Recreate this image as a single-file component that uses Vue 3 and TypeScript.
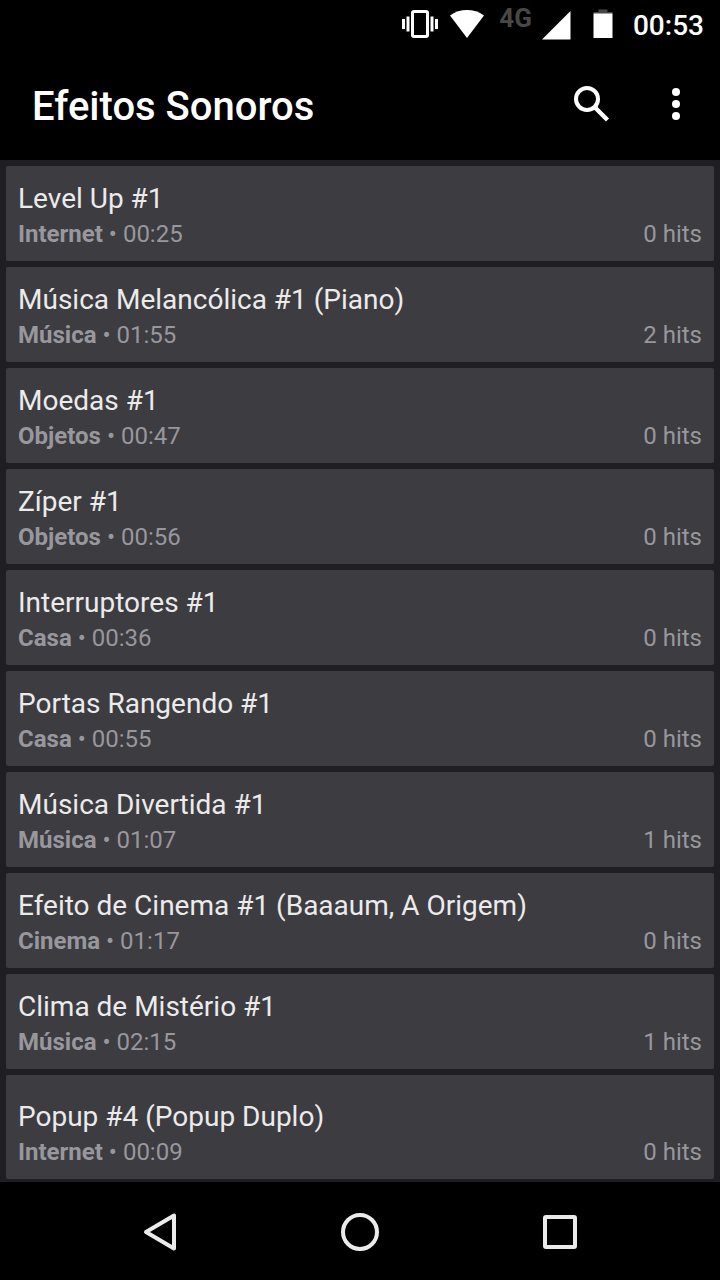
<script setup lang="ts">
interface Sound {
  title: string
  category: string
  duration: string
  hits: number
}

const sounds: Sound[] = [
  { title: 'Level Up #1', category: 'Internet', duration: '00:25', hits: 0 },
  { title: 'Música Melancólica #1 (Piano)', category: 'Música', duration: '01:55', hits: 2 },
  { title: 'Moedas #1', category: 'Objetos', duration: '00:47', hits: 0 },
  { title: 'Zíper #1', category: 'Objetos', duration: '00:56', hits: 0 },
  { title: 'Interruptores #1', category: 'Casa', duration: '00:36', hits: 0 },
  { title: 'Portas Rangendo #1', category: 'Casa', duration: '00:55', hits: 0 },
  { title: 'Música Divertida #1', category: 'Música', duration: '01:07', hits: 1 },
  { title: 'Efeito de Cinema #1 (Baaaum, A Origem)', category: 'Cinema', duration: '01:17', hits: 0 },
  { title: 'Clima de Mistério #1', category: 'Música', duration: '02:15', hits: 1 },
  { title: 'Popup #4 (Popup Duplo)', category: 'Internet', duration: '00:09', hits: 0 },
]
</script>

<template>
  <div class="screen">
    <div class="status">
      <svg class="vibrate" width="36" height="48" viewBox="0 0 36 48" aria-hidden="true">
        <rect x="10.500" y="11.500" width="15" height="25" rx="1.500" fill="none" stroke="#fff" stroke-width="3" />
        <path d="M0 19h3v10H0zM4.500 16.500h3v15h-3zM28.500 16.500h3v15h-3zM33 19h3v10h-3z" fill="#fff" />
      </svg>
      <svg class="wifi" width="34" height="48" viewBox="0 0 34 48" aria-hidden="true">
        <path d="M0 15.500C10 8.200 24 8.200 34 15.500L17 38z" fill="#fff" />
      </svg>
      <span class="network">4G</span>
      <svg class="signal" width="29" height="48" viewBox="0 0 29 48" aria-hidden="true">
        <path d="M28.500 11v28.500H0z" fill="#fff" />
      </svg>
      <svg class="battery" width="20" height="48" viewBox="0 0 20 48" aria-hidden="true">
        <path d="M5.500 9.500h9V12H19.500v2H.5v-2h5z" fill="#484848" />
        <path d="M.5 13.500h19V38H.5z" fill="#fff" />
      </svg>
      <time class="clock">00:53</time>
    </div>

    <header class="toolbar">
      <h1>Efeitos Sonoros</h1>
      <button type="button" class="search" aria-label="Pesquisar">
        <svg width="48" height="48" viewBox="0 0 48 48" aria-hidden="true">
          <circle cx="19" cy="19" r="11" fill="none" stroke="#fff" stroke-width="4" />
          <path d="M27 27.500L39.500 40" fill="none" stroke="#fff" stroke-width="4.400" />
          <path d="M26.500 26l2 2" stroke="#fff" stroke-width="4" />
        </svg>
      </button>
      <button type="button" class="more" aria-label="Mais opções">
        <svg width="48" height="48" viewBox="0 0 48 48" aria-hidden="true" fill="#fff">
          <circle cx="24" cy="12" r="4" />
          <circle cx="24" cy="24" r="4" />
          <circle cx="24" cy="36" r="4" />
        </svg>
      </button>
    </header>

    <main>
      <ul class="list">
        <li v-for="sound in sounds" :key="sound.title" class="card">
          <h2>{{ sound.title }}</h2>
          <div class="meta">
            <span><strong>{{ sound.category }}</strong> • {{ sound.duration }}</span>
            <span>{{ sound.hits }} hits</span>
          </div>
        </li>
      </ul>
    </main>

    <nav class="navbar" aria-label="Sistema">
      <button type="button" aria-label="Voltar">
        <svg width="48" height="48" viewBox="0 0 48 48" aria-hidden="true">
          <path d="M10 24L38 7.500v33z" />
        </svg>
      </button>
      <button type="button" aria-label="Início">
        <svg width="48" height="48" viewBox="0 0 48 48" aria-hidden="true">
          <circle cx="24" cy="24" r="17" />
        </svg>
      </button>
      <button type="button" aria-label="Recentes">
        <svg width="48" height="48" viewBox="0 0 48 48" aria-hidden="true">
          <rect x="9" y="9" width="30" height="30" rx="1" />
        </svg>
      </button>
    </nav>
  </div>
</template>

<style>
body {
  margin: 0;
  background: #000;
}
</style>

<style scoped>
.screen {
  display: flex;
  flex-direction: column;
  min-height: 100vh;
  background: #000;
  color: #fff;
  font-family: Roboto, "Liberation Sans", sans-serif;
}

svg {
  display: block;
  flex: none;
}

button {
  display: flex;
  align-items: center;
  justify-content: center;
  margin: 0;
  padding: 0;
  border: 0;
  background: none;
}

.status {
  display: flex;
  justify-content: flex-end;
  height: 48px;
  padding-right: 16px;
}

.wifi {
  margin-left: 12px;
}

.network {
  margin-left: 15px;
  color: #484848;
  font-size: 26px;
  font-weight: 700;
  line-height: 36px;
}

.signal {
  margin-left: 10px;
}

.battery {
  margin-left: 22px;
}

.clock {
  margin-left: 20px;
  font-size: 28px;
  font-weight: 500;
  line-height: 52px;
}

.toolbar {
  display: flex;
  align-items: center;
  height: 112px;
  padding: 0 20px 0 32px;
}

h1 {
  flex: 1;
  margin: 0;
  padding-top: 6px;
  font-size: 40px;
  font-weight: 500;
  line-height: 48px;
}

.more {
  margin-left: 36px;
}

main {
  flex: 1;
  padding: 6px 6px 3px;
  background: #1f1e23;
}

.list {
  display: flex;
  flex-direction: column;
  gap: 6px;
  margin: 0;
  padding: 0;
  list-style: none;
}

.card {
  padding: 15px 12px 11px;
  border-radius: 2px;
  background: #3d3c41;
}

.card:last-child {
  padding-top: 24px;
}

h2 {
  margin: 0 0 1px;
  color: #ebebeb;
  font-size: 28px;
  font-weight: 400;
  line-height: 36px;
}

.meta {
  display: flex;
  justify-content: space-between;
  color: #98979d;
  font-size: 24px;
  line-height: 32px;
}

.meta strong {
  font-weight: 700;
}

.navbar {
  display: flex;
  justify-content: center;
  height: 96px;
  padding-top: 2px;
}

.navbar button {
  width: 200px;
}

.navbar svg {
  fill: none;
  stroke: #ebebeb;
  stroke-width: 4;
  stroke-linejoin: round;
}
</style>
